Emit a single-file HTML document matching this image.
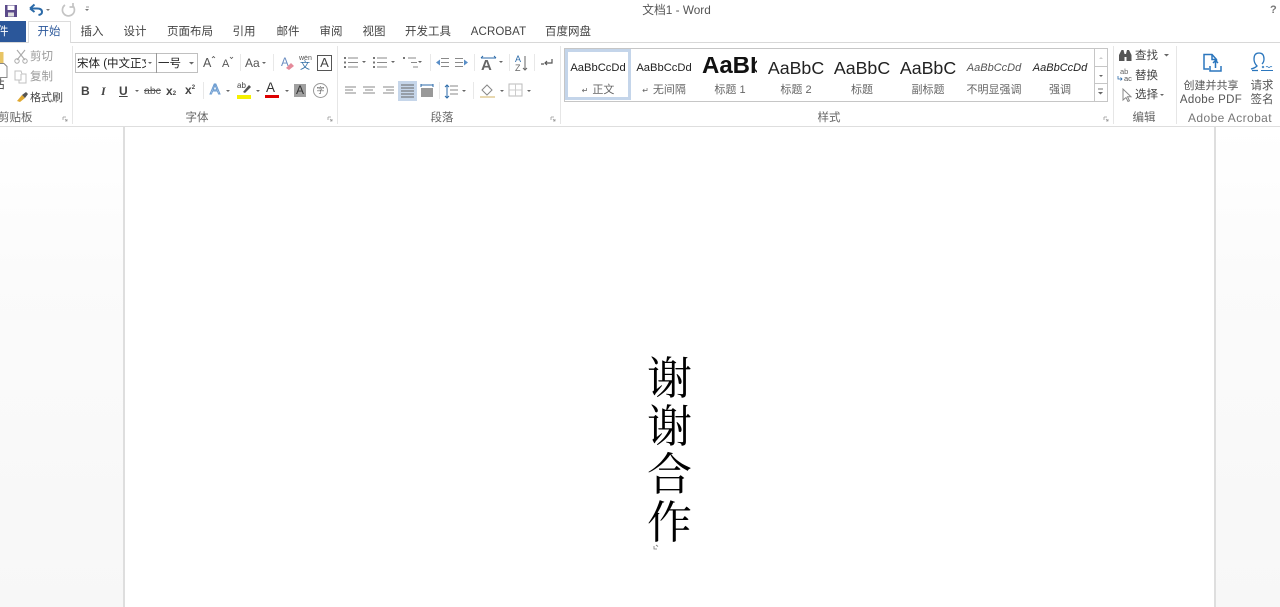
<!DOCTYPE html>
<html lang="zh"><head><meta charset="utf-8"><title>文档1 - Word</title>
<style>
html,body{margin:0;padding:0;width:1280px;height:607px;overflow:hidden;background:#fff}
body{position:relative;font-family:"Liberation Sans","Noto Sans CJK SC",sans-serif;color:#444;font-size:11px}
.t{position:absolute;white-space:nowrap;line-height:14px;filter:blur(.25px)}
.c{transform:translateX(-50%)}
.tab{font-size:11.5px;color:#444;top:25px}
.g{font-size:11.5px;color:#666;top:111px}
.b{position:absolute;background:#d8d8d8}
.s{font-size:11px;color:#666;top:83px}
.s small{font-size:8px;margin-right:1px}
.st{top:61px;color:#222}
svg{position:absolute;left:0;top:0;filter:blur(.25px)}
</style></head><body>

<div style="position:absolute;left:0;top:127px;width:123px;height:480px;background:linear-gradient(#fff,#fbfbfb 30%,#f7f7f7)"></div>
<div style="position:absolute;left:1216px;top:127px;width:64px;height:480px;background:linear-gradient(#fff,#fbfbfb 30%,#f7f7f7)"></div>
<div class="b" style="left:123px;top:127px;width:2px;height:480px;background:#dedede"></div>
<div class="b" style="left:1214px;top:127px;width:2px;height:480px;background:#dedede"></div>

<!-- Tabs -->
<div style="position:absolute;left:0;top:21px;width:26px;height:22px;background:#2b579a"></div>
<div class="t" style="left:0;top:25px;color:#fff;font-size:11.5px;margin-left:-3px">件</div>
<div style="position:absolute;left:28px;top:21px;width:43px;height:22px;border:1px solid #dcdcdc;border-bottom:none;box-sizing:border-box;background:#fff"></div>
<div class="t tab c" style="left:49px;color:#2b579a">开始</div>
<div class="t tab c" style="left:92px">插入</div>
<div class="t tab c" style="left:135px">设计</div>
<div class="t tab c" style="left:190px">页面布局</div>
<div class="t tab c" style="left:244px">引用</div>
<div class="t tab c" style="left:288px">邮件</div>
<div class="t tab c" style="left:331px">审阅</div>
<div class="t tab c" style="left:374px">视图</div>
<div class="t tab c" style="left:428px">开发工具</div>
<div class="t tab c" style="left:498.500px;letter-spacing:.1px">ACROBAT</div>
<div class="t tab c" style="left:568px">百度网盘</div>
<div class="b" style="left:0;top:42px;width:28px;height:1px"></div>
<div class="b" style="left:71px;top:42px;width:1209px;height:1px"></div>
<div class="b" style="left:0;top:126px;width:1280px;height:1px;background:#dedede"></div>

<div class="t c" style="left:676.500px;top:3px;font-size:11.800px;color:#555">文档1 - Word</div>
<div class="t" style="left:1270px;top:3px;font-size:11px;font-weight:bold;color:#777">?</div>

<!-- group separators -->
<div class="b" style="left:72px;top:46px;width:1px;height:78px;background:#e6e6e6"></div>
<div class="b" style="left:337px;top:46px;width:1px;height:78px;background:#e6e6e6"></div>
<div class="b" style="left:560px;top:46px;width:1px;height:78px;background:#e6e6e6"></div>
<div class="b" style="left:1113px;top:46px;width:1px;height:78px;background:#e6e6e6"></div>
<div class="b" style="left:1176px;top:46px;width:1px;height:78px;background:#e6e6e6"></div>

<!-- group labels -->
<div class="t g" style="left:-2px">剪贴板</div>
<div class="t g c" style="left:197px">字体</div>
<div class="t g c" style="left:442px">段落</div>
<div class="t g c" style="left:829px">样式</div>
<div class="t g c" style="left:1144px">编辑</div>
<div class="t g c" style="left:1230px;font-size:12px;letter-spacing:.4px;color:#777">Adobe Acrobat</div>

<!-- clipboard -->
<div class="t" style="left:-7px;top:78px;font-size:11.5px">粘</div>
<div class="t" style="left:30px;top:50px;color:#999;font-size:11.5px">剪切</div>
<div class="t" style="left:30px;top:70px;color:#999;font-size:11.5px">复制</div>
<div class="t" style="left:30px;top:91px;color:#444;font-size:11px">格式刷</div>

<!-- font -->
<div style="position:absolute;left:75px;top:53px;width:123px;height:20px;border:1px solid #c0c0c0;box-sizing:border-box"></div>
<div class="b" style="left:156px;top:53px;width:1px;height:20px;background:#999"></div>
<div class="t" style="left:77px;top:57px;font-size:11.5px;color:#222;width:69px;overflow:hidden">宋体 (中文正文)</div>
<div class="t" style="left:158px;top:57px;font-size:11.5px;color:#222">一号</div>
<div class="t" style="left:203px;top:56px;font-size:12.5px;color:#555">A</div>
<div class="t" style="left:222px;top:57px;font-size:11px;color:#555">A</div>
<div class="t" style="left:245px;top:56px;font-size:12px;color:#555">Aa</div>
<div style="position:absolute;left:317px;top:55px;width:15px;height:16px;border:1px solid #555;box-sizing:border-box;font-size:13px;line-height:14px;text-align:center;color:#444">A</div>
<div class="t" style="left:299px;top:55px;font-size:7px;color:#555;line-height:8px">wén</div>
<div class="t" style="left:300px;top:61px;font-size:10px;color:#2f6ea5;line-height:12px">文</div>
<div class="t" style="left:81px;top:84px;font-size:12px;font-weight:bold;color:#444">B</div>
<div class="t" style="left:101px;top:84px;font-size:12px;font-style:italic;font-weight:bold;font-family:'Liberation Serif',serif;color:#444">I</div>
<div class="t" style="left:119px;top:84px;font-size:12px;font-weight:bold;text-decoration:underline;color:#444">U</div>
<div class="t" style="left:144px;top:84px;font-size:10.5px;text-decoration:line-through;color:#555">abc</div>
<div class="t" style="left:166px;top:84px;font-size:12px;font-weight:bold;color:#444">x<span style="font-size:6px">2</span></div>
<div class="t" style="left:185px;top:83px;font-size:12px;font-weight:bold;color:#444">x<sup style="font-size:6px;line-height:0">2</sup></div>
<div class="t" style="left:210px;top:83px;font-size:15px;color:#fff;-webkit-text-stroke:1px #6a9bd0">A</div>
<div class="t" style="left:237px;top:81px;font-size:8px;color:#444;line-height:10px">ab</div>
<div class="t" style="left:266px;top:81px;font-size:13.500px;color:#333">A</div>
<div style="position:absolute;left:265px;top:95px;width:14px;height:3px;background:#d00"></div>
<div style="position:absolute;left:237px;top:95px;width:14px;height:4px;background:#f5f000"></div>
<div style="position:absolute;left:294px;top:84px;width:12px;height:13px;background:#a0a0a0;color:#333;font-size:12px;line-height:13px;text-align:center">A</div>
<div style="position:absolute;left:313px;top:83px;width:13px;height:13px;border:1px solid #999;border-radius:50%;font-size:8px;line-height:13px;text-align:center;color:#666">字</div>

<!-- Highlight justified -->
<div style="position:absolute;left:398px;top:81px;width:19px;height:20px;background:#c6d6ea"></div>

<!-- Styles gallery -->
<div style="position:absolute;left:564px;top:48px;width:544px;height:54px;border:1px solid #c6c6c6;box-sizing:border-box"></div>
<div style="position:absolute;left:565px;top:49px;width:66px;height:51px;border:3px solid #c4d5ea;box-sizing:border-box;background:#fff"></div>
<div class="t st c" style="left:598px;font-size:11.200px">AaBbCcDd</div>
<div class="t st c" style="left:664px;font-size:11.200px">AaBbCcDd</div>
<div class="t st" style="left:702px;top:57px;font-size:24px;font-weight:bold;line-height:18px;color:#111;width:55px;overflow:hidden;height:20px">AaBbC</div>
<div class="t st c" style="left:796px;font-size:17.800px">AaBbC</div>
<div class="t st c" style="left:862px;font-size:17.800px">AaBbC</div>
<div class="t st c" style="left:928px;font-size:17.800px">AaBbC</div>
<div class="t st c" style="left:994px;font-size:11px;font-style:italic;color:#555">AaBbCcDd</div>
<div class="t st c" style="left:1060px;font-size:11px;font-style:italic">AaBbCcDd</div>
<div class="t s c" style="left:598px"><small>↵</small> 正文</div>
<div class="t s c" style="left:664px"><small>↵</small> 无间隔</div>
<div class="t s c" style="left:730px">标题 1</div>
<div class="t s c" style="left:796px">标题 2</div>
<div class="t s c" style="left:862px">标题</div>
<div class="t s c" style="left:928px">副标题</div>
<div class="t s c" style="left:994px">不明显强调</div>
<div class="t s c" style="left:1060px">强调</div>
<div style="position:absolute;left:1094px;top:48px;width:14px;height:54px;border:1px solid #c6c6c6;box-sizing:border-box;background:#fff"></div>
<div class="b" style="left:1094px;top:66px;width:14px;height:1px;background:#c6c6c6"></div>
<div class="b" style="left:1094px;top:83px;width:14px;height:1px;background:#c6c6c6"></div>

<!-- Editing -->
<div class="t" style="left:1135px;top:49px;font-size:11.500px">查找</div>
<div class="t" style="left:1135px;top:69px;font-size:11.500px">替换</div>
<div class="t" style="left:1135px;top:88px;font-size:11.500px">选择</div>
<div class="t" style="left:1120px;top:68px;font-size:7.500px;line-height:8px;color:#666">ab</div>
<div class="t" style="left:1124px;top:75px;font-size:7.500px;line-height:8px;color:#555">ac</div>

<!-- Acrobat -->
<div class="t c" style="left:1211px;top:78.500px;font-size:11px;color:#555">创建并共享</div>
<div class="t c" style="left:1211px;top:93px;font-size:11.500px;letter-spacing:.3px;color:#555">Adobe PDF</div>
<div class="t c" style="left:1262px;top:78.500px;font-size:11.500px;color:#555">请求</div>
<div class="t c" style="left:1262px;top:93px;font-size:11.500px;color:#555">签名</div>

<svg width="1280" height="607" fill="none">
 <!-- save -->
 <rect x="5" y="5" width="12" height="12" fill="#5b4a8a"/><rect x="7.500" y="5.500" width="7" height="4.500" fill="#fff"/><rect x="8" y="12.500" width="6" height="4" fill="#ddd"/>
 <!-- undo/redo -->
 <path d="M30 8.500 L34.500 4.500 M30 8.500 L34.500 12 M30 8.500 H37 Q42 8.500 42 12 Q42 14.500 38.500 15" stroke="#2b6aa8" stroke-width="2"/>
 <path d="M46 9 l2 2 l2-2z M85 9 l2 2 l2-2z" fill="#777"/><path d="M86 7h3" stroke="#999"/>
 <path d="M72.500 5.500 A6 6 0 1 1 65 5 M73 3 v4 h-3.500" stroke="#c4c4c4" stroke-width="1.700"/>
 <!-- paste -->
 <rect x="-4" y="52" width="7.500" height="11" fill="#e8c565"/><path d="M-1 63.500 h5 l3 3 v11 h-8z" fill="#fff" stroke="#888"/>
 <!-- scissors -->
 <path d="M17 50 l8 10 M25 50 l-8 10" stroke="#aaa" stroke-width="1.100"/><circle cx="17" cy="61" r="2.200" stroke="#aaa"/><circle cx="25" cy="61" r="2.200" stroke="#aaa"/>
 <!-- copy -->
 <path d="M15 71 h6 l1 3 h4 v9 h-7 v-3 h-4z M21 74 v6 h-3" stroke="#c0c0c0"/>
 <!-- brush -->
 <path d="M17 101 l5-6 l3 3 l-5 4z" fill="#e0a830"/><path d="M22 95 l4-3 l2 2 l-3 4z" fill="#555"/>
 <!-- dialog launchers -->
 <g stroke="#999" stroke-width=".8"><path d="M63 117 h3 M63 117 v3 M65 119 l2 2 M67 119 v2 h-2"/><path d="M328 117 h3 M328 117 v3 M330 119 l2 2 M332 119 v2 h-2"/><path d="M551 117 h3 M551 117 v3 M553 119 l2 2 M555 119 v2 h-2"/><path d="M1104 117 h3 M1104 117 v3 M1106 119 l2 2 M1108 119 v2 h-2"/></g>
 <!-- small dropdown arrows -->
 <g fill="#666"><path d="M148 62h4l-2 2z M189 62h5l-2.500 2.500z M262 62h4l-2 2z M135 90h4l-2 2z M226 90h4l-2 2z M256 90h4l-2 2z M285 90h4l-2 2z M362 61h4l-2 2z M391 61h4l-2 2z M418 61h4l-2 2z M499 61h4l-2 2z M462 90h4l-2 2z M500 90h4l-2 2z M527 90h4l-2 2z M1164 54h5l-2.500 2.500z M1160 94h4l-2 2z M1099 75h4l-2 2z M1098 92h5l-2.500 2.500z"/></g>
 <path d="M1099 59 l2-2 l2 2z" fill="#ccc"/><path d="M1098 89h5" stroke="#777"/>
 <!-- font grow/shrink small carets, clear format -->
 <path d="M212 58 l1.500-1.500 l1.500 1.500 M230 57 l1.500 1.500 l1.500-1.500" stroke="#555" stroke-width=".8"/>
 <text x="281" y="66" font-size="11.500" fill="#6a8cc0" font-family="Liberation Sans">A</text>
 <path d="M286 68 l5-5 l3 3 l-5 4z" fill="#e58a9a"/>
 <!-- highlight pen -->
 <path d="M243 92 l6-7 l2 2 l-6 6z" fill="#555"/>
 <!-- separators in groups -->
 <g fill="#e8e8e8"><rect x="240" y="54" width="1" height="17"/><rect x="273" y="54" width="1" height="17"/><rect x="203" y="82" width="1" height="17"/><rect x="430" y="54" width="1" height="17"/><rect x="474" y="54" width="1" height="17"/><rect x="509" y="54" width="1" height="17"/><rect x="534" y="54" width="1" height="17"/><rect x="439" y="82" width="1" height="17"/><rect x="473" y="82" width="1" height="17"/></g>
 <!-- list icons -->
 <g stroke="#8a8a8a" stroke-width="1">
  <path d="M348 58h10M348 62.500h10M348 67h10"/><path d="M377 58h10M377 62.500h10M377 67h10"/><path d="M408 58h8M411 62.500h6M413 67h5"/>
  <path d="M441 58.500h8M441 62.500h8M441 66.500h8M463 58.500h-8M463 62.500h-8M463 66.500h-8"/>
  <path d="M345 87h11M345 90h8M345 93h11M363 87h12M365 90h8M363 93h12M383 87h11M386 90h8M383 93h11"/>
  <path d="M401 85h13M401 88h13M401 91h13M401 94h13M401 97h13" stroke="#666"/>
  <path d="M450 86h8M450 90h8M450 94h8"/>
 </g>
 <g fill="#777"><rect x="344" y="57" width="2" height="2"/><rect x="344" y="61.500" width="2" height="2"/><rect x="344" y="66" width="2" height="2"/><rect x="373" y="57" width="2" height="2"/><rect x="373" y="61.500" width="2" height="2"/><rect x="373" y="66" width="2" height="2"/><rect x="403" y="57" width="2" height="2"/></g>
 <path d="M436 62.500 l4-3 v6z M468 62.500 l-4-3 v6z" fill="#5a8fc8"/>
 <!-- distributed -->
 <rect x="421" y="88" width="12" height="9" fill="#999"/><path d="M421 85h12M421 84v3M433 84v3" stroke="#2b6aa8"/>
 <!-- line spacing -->
 <path d="M447 85v13M445 87l2-2l2 2M445 96l2 2l2-2" stroke="#2b6aa8"/>
 <!-- crossed text dir -->
 <text x="481" y="70" font-size="15" font-weight="bold" fill="#666" font-family="Liberation Sans">A</text><path d="M481 58h15M481 58l2-2M496 58l-2-2" stroke="#2b6aa8"/>
 <!-- sort -->
 <text x="515" y="62" font-size="9" fill="#2b6aa8" font-family="Liberation Sans">A</text><text x="515" y="71" font-size="9" fill="#666" font-family="Liberation Sans">Z</text><path d="M525 56v14M523 68l2 2l2-2" stroke="#666"/>
 <!-- pilcrow -->
 <path d="M552 59v4h-7M547 61l-2 2l2 2M541 64h3" stroke="#555" stroke-width="1.200"/>
 <!-- fill / border -->
 <path d="M482 90l5-5l5 5l-5 5z" stroke="#888" fill="#fff"/><rect x="480" y="96" width="15" height="2" fill="#e8d8b0"/>
 <rect x="509" y="84" width="13" height="12" stroke="#bbb"/><path d="M515.500 84v12M509 90h13" stroke="#ccc"/>
 <!-- binoculars -->
 <path d="M1119 61v-6l2.500-5h2l1 4h1.500l1-4h2l2.500 5v6h-5v-4h-2v4z" fill="#555"/>
 <path d="M1118 76v3h4M1120.500 77.500l1.500 1.500-1.500 1.500" stroke="#2b6aa8" stroke-width=".8"/>
 <!-- cursor -->
 <path d="M1123 89v11l3-2.500 2 4 1.500-.7-2-4h3.500z" stroke="#888" fill="#fff"/>
 <!-- Acrobat file -->
 <path d="M1209 69h-5v-14.500h8l4.500 5v3M1212 54.500v5h4.500" stroke="#2b76bd" stroke-width="1.500"/>
 <path d="M1210 66v5h11v-5M1215.500 68v-7M1213 63l2.500-2.500 2.500 2.500" stroke="#2b76bd" stroke-width="1.500"/>
 <!-- Signature -->
 <path d="M1251 69q4-1 6-3q-3-3-3-7q0-6 5-6q5 0 5 6q0 3-2 5M1252 70.500h6" stroke="#2b76bd" stroke-width="1.300"/>
 <path d="M1261 70.500h12" stroke="#2b76bd" stroke-width="1"/>
 <path d="M1262 66l2 2M1264 66l-2 2M1266 67q1-1 2 0t2 0t2 0" stroke="#2b76bd" stroke-width=".8"/>
 <!-- caret mark -->
 <path d="M654 546v3h3M656 545l2 1.500" stroke="#777" stroke-width=".8"/>
</svg>

<!-- Document text -->
<div style="position:absolute;left:645.500px;top:351px;width:48px;font-family:'Noto Serif CJK SC','Liberation Serif',serif;font-size:45px;line-height:48px;color:#000;text-align:center;font-weight:400">谢<br>谢<br>合<br>作</div>
</body></html>
